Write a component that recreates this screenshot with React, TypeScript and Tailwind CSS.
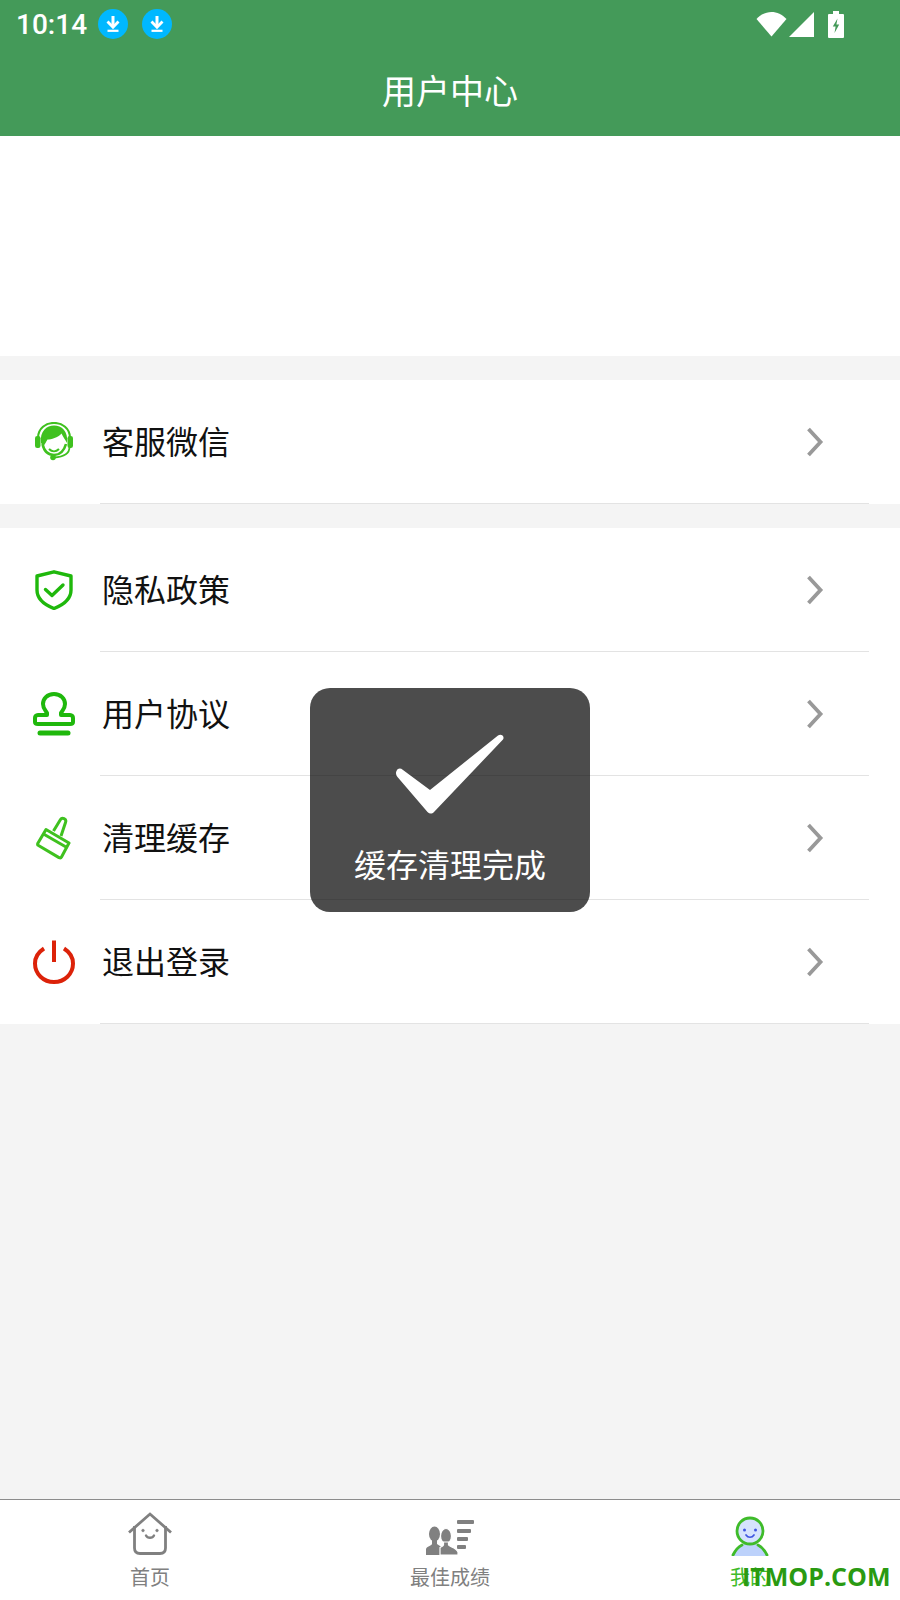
import type { ReactNode } from "react";

const font = "font-['Noto_Sans_CJK_SC','Noto_Sans',sans-serif]";

function Chevron() {
  return (
    <svg width="18" height="30" viewBox="0 0 18 30" fill="none" className="mr-[45px] shrink-0">
      <path d="M2.5 2 L14.5 15 L2.5 28" stroke="#999999" strokeWidth="3.8" />
    </svg>
  );
}

function DownloadDot() {
  return (
    <svg width="30" height="30" viewBox="0 0 30 30">
      <circle cx="15" cy="15" r="15" fill="#00b8ff" />
      <path d="M15 7 V16.5" stroke="#fff" strokeWidth="3" />
      <path d="M9.5 12.5 L15 18.2 L20.5 12.5" stroke="#fff" strokeWidth="2.8" fill="none" />
      <path d="M9.5 21.8 H20.5" stroke="#fff" strokeWidth="2.2" />
    </svg>
  );
}

function StatusBar() {
  return (
    <div className="flex h-[48px] items-center justify-between pl-[16px] pr-[56px] text-white">
      <div className="flex items-center">
        <span className="pt-[2px] font-['Roboto',sans-serif] text-[28px] font-medium leading-none">10:14</span>
        <div className="ml-[11px] flex gap-[14px]">
          <DownloadDot />
          <DownloadDot />
        </div>
      </div>
      <div className="flex items-center">
        <svg width="31" height="26" viewBox="0 0 31 26">
          <path d="M0.5 8 C9 -1.5 22 -1.5 30.5 8 L15.5 25.5 Z" fill="#fff" />
        </svg>
        <svg width="25" height="25" viewBox="0 0 25 25" className="ml-[2px]">
          <path d="M0 25 L25 0 V25 Z" fill="#fff" />
        </svg>
        <svg width="16" height="27" viewBox="0 0 16 27" className="ml-[14px]">
          <path d="M5 0 H11 V3 H15 A1 1 0 0 1 16 4 V26 A1 1 0 0 1 15 27 H1 A1 1 0 0 1 0 26 V4 A1 1 0 0 1 1 3 H5 Z" fill="#fff" />
          <path d="M9.5 7.5 L4.8 15.5 H7.6 L6.5 22 L11.2 13.6 H8.4 Z" fill="#449a59" />
        </svg>
      </div>
    </div>
  );
}

function HeadsetIcon() {
  return (
    <svg width="38" height="40" viewBox="0 0 38 40">
      <path d="M3 16 C3 -4 35 -4 35 16" fill="none" stroke="#3fc11f" strokeWidth="2.2" />
      <path d="M6 21 C4.5 9 12 3.5 19 3.5 C26.5 3.5 33.5 9 32 21 C30.5 18 28 15 26.5 11.5 C23 15.5 16 17.5 12.5 17.5 C11 20 10 22 8.5 24 Z" fill="#3fc11f" />
      <rect x="0" y="14" width="5.5" height="12" rx="2.2" fill="#3fc11f" />
      <rect x="32.5" y="14" width="5.5" height="12" rx="2.2" fill="#3fc11f" />
      <path d="M7.5 22 C9 29 13 33 19 33 C25 33 29 29 31 22" fill="none" stroke="#3fc11f" strokeWidth="2.6" />
      <path d="M14 27 C17 30 21 30 24 27" fill="none" stroke="#3fc11f" strokeWidth="2" />
      <path d="M34.5 25 C34.5 32 28 35 19 35.5" fill="none" stroke="#3fc11f" strokeWidth="1.8" />
      <circle cx="18" cy="35.5" r="2.8" fill="#3fc11f" />
    </svg>
  );
}

function ShieldIcon() {
  return (
    <svg width="38" height="40" viewBox="0 0 38 40" fill="none">
      <path d="M19 1.8 L36 6 V20 C36 29 28 35 19 38.5 C10 35 2 29 2 20 V6 Z" stroke="#1fb80c" strokeWidth="3.4" strokeLinejoin="round" />
      <path d="M10.5 19.5 L17 25.5 L28 15" stroke="#1fb80c" strokeWidth="3.4" strokeLinecap="round" strokeLinejoin="round" />
    </svg>
  );
}

function StampIcon() {
  return (
    <svg width="42" height="44" viewBox="0 0 42 44" fill="none">
      <path
        d="M21 2 C14 2 10 7 10 12 C10 17 13 19 14 21 V23 H5 C3 23 2 24.5 2 26 V30 C2 31.5 3 32 5 32 H37 C39 32 40 31.5 40 30 V26 C40 24.5 39 23 37 23 H28 V21 C29 19 32 17 32 12 C32 7 28 2 21 2 Z"
        stroke="#1fb80c"
        strokeWidth="4"
        strokeLinejoin="round"
      />
      <path d="M7 41 H35" stroke="#1fb80c" strokeWidth="5" strokeLinecap="round" />
    </svg>
  );
}

function BrushIcon() {
  return (
    <svg width="36" height="44" viewBox="0 0 36 44" fill="none" stroke="#3fc11f" strokeWidth="3" strokeLinejoin="round">
      <path d="M10 13.5 L33 27 L25.5 41 C25 42 24 42 23 41.6 L2.5 29.5 C1.5 29 1.5 28 2 27 Z" />
      <path d="M7.5 18 L30 31" />
      <path d="M17.5 15 L24.5 3.5 C26 1 31 2.5 29.5 6.5 L25 20" />
    </svg>
  );
}

function PowerIcon() {
  return (
    <svg width="42" height="44" viewBox="0 0 42 44" fill="none">
      <path d="M11 8.5 C5.5 12 2 17 2 23.5 C2 34 10.5 42 21 42 C31.5 42 40 34 40 23.5 C40 17 36.5 12 31 8.5" stroke="#dc2209" strokeWidth="4" />
      <path d="M21 0.5 V22" stroke="#dc2209" strokeWidth="4" />
    </svg>
  );
}

function Row({ icon, label }: { icon: ReactNode; label: string }) {
  return (
    <div className="flex h-[124px] bg-white">
      <div className="flex w-[100px] shrink-0 items-center justify-center pl-[8px]">{icon}</div>
      <div className="mr-[31px] flex flex-1 items-center justify-between border-b border-[#e3e3e3]">
        <span className="pb-[4px] pl-[2px] text-[32px] leading-none text-[#111]">{label}</span>
        <Chevron />
      </div>
    </div>
  );
}

function HomeIcon() {
  return (
    <svg width="44" height="44" viewBox="0 0 44 44" fill="none" stroke="#808080">
      <path d="M1 20.5 L22 2 L43 20.5" strokeWidth="2.8" />
      <path d="M6.5 14 V36 C6.5 39.5 8.5 41.5 12 41.5 H32 C35.5 41.5 37.5 39.5 37.5 36 V14" strokeWidth="2.8" />
      <path d="M18 23.5 C19.5 26.5 24.5 26.5 26 23.5" strokeWidth="2.4" strokeLinecap="round" />
      <circle cx="15" cy="18.5" r="1.3" fill="#808080" strokeWidth="0.6" />
      <circle cx="29" cy="18.5" r="1.3" fill="#808080" strokeWidth="0.6" />
    </svg>
  );
}

function RankIcon() {
  return (
    <svg width="48" height="36" viewBox="0 0 48 36" fill="#808080">
      <rect x="31" y="0" width="17" height="4" rx="1" />
      <rect x="31" y="9" width="14" height="4" rx="1" />
      <rect x="31" y="17" width="11" height="4" rx="1" />
      <rect x="31" y="25" width="9" height="4" rx="1" />
      <ellipse cx="8.5" cy="14" rx="5.5" ry="7.5" />
      <path d="M6 20 H11 V24 L17 28 V35 H0 V29 C1 26 5 26 6 24 Z" />
      <ellipse cx="20" cy="16" rx="5.5" ry="7.5" stroke="#fff" strokeWidth="1.2" />
      <path d="M17.5 22 H22.5 V25 C24 27 30 27.5 32 32 V35 H14 V27.5 C15 27 17.5 26 17.5 25 Z" stroke="#fff" strokeWidth="1.2" />
    </svg>
  );
}

function MeIcon() {
  return (
    <svg width="38" height="40" viewBox="0 0 38 40">
      <path d="M1 40 C4 31 11 27 19 27 C27 27 34 31 37 40 Z" fill="#bdd2fb" />
      <path d="M2 39 C4 35 7 31 11 29 M27 29 C31 31 34 35 36 39" fill="none" stroke="#3fbb2a" strokeWidth="2.8" strokeLinecap="round" />
      <circle cx="19" cy="15" r="13" fill="#d5e3fd" stroke="#3fbb2a" strokeWidth="2.8" />
      <circle cx="13.5" cy="14" r="1.5" fill="#3f55e0" />
      <circle cx="24.5" cy="14" r="1.5" fill="#3f55e0" />
      <path d="M15 19 C17 22 21 22 23 19" fill="none" stroke="#3f55e0" strokeWidth="1.7" strokeLinecap="round" />
    </svg>
  );
}

function NavItem({ icon, label, active }: { icon: ReactNode; label: string; active?: boolean }) {
  return (
    <div className="flex flex-col items-center">
      <div className="flex h-[56px] items-end">{icon}</div>
      <span className={`mt-[10px] text-[20px] leading-[22px] ${active ? "text-[#3fbb2a]" : "text-[#808080]"}`}>{label}</span>
    </div>
  );
}

export default function App() {
  return (
    <div className={`relative flex h-[1600px] w-[900px] flex-col overflow-hidden bg-[#f4f4f4] ${font}`}>
      <header className="h-[136px] shrink-0 bg-[#449a59]">
        <StatusBar />
        <div className="flex h-[84px] items-center justify-center text-[34px] leading-none text-white">用户中心</div>
      </header>

      <div className="h-[220px] shrink-0 bg-white" />

      <div className="mt-[24px]">
        <Row icon={<HeadsetIcon />} label="客服微信" />
      </div>
      <div className="mt-[24px]">
        <Row icon={<ShieldIcon />} label="隐私政策" />
        <Row icon={<StampIcon />} label="用户协议" />
        <Row icon={<BrushIcon />} label="清理缓存" />
        <Row icon={<PowerIcon />} label="退出登录" />
      </div>

      <nav className="mt-auto grid h-[101px] shrink-0 grid-cols-3 border-t border-[#8c8c8c] bg-white">
        <NavItem icon={<HomeIcon />} label="首页" />
        <NavItem icon={<RankIcon />} label="最佳成绩" />
        <NavItem icon={<MeIcon />} label="我的" active />
      </nav>

      {/* toast sits over the list */}
      <div className="absolute left-[310px] top-[688px] flex h-[224px] w-[280px] flex-col items-center rounded-[20px] bg-[rgba(0,0,0,0.7)]">
        <svg width="110" height="80" viewBox="0 0 110 80" className="mt-[46px]">
          <path
            d="M1.5 37 C3 34 5.5 34 8 36 L35 56 L103 1.5 C106 -0.5 110 2 108 5.5 L39 78 C37 80 34.5 80 32.5 78 L2.5 43 C1 41 0.5 39 1.5 37 Z"
            fill="#fff"
          />
        </svg>
        <span className="mt-[33px] text-[32px] leading-none text-white">缓存清理完成</span>
      </div>

      {/* watermark */}
      <span className="absolute left-[742px] top-[1559px] font-['Open_Sans',sans-serif] text-[25px] font-bold leading-[34px] text-[#2a9a12]">
        ITMOP.COM
      </span>
    </div>
  );
}
